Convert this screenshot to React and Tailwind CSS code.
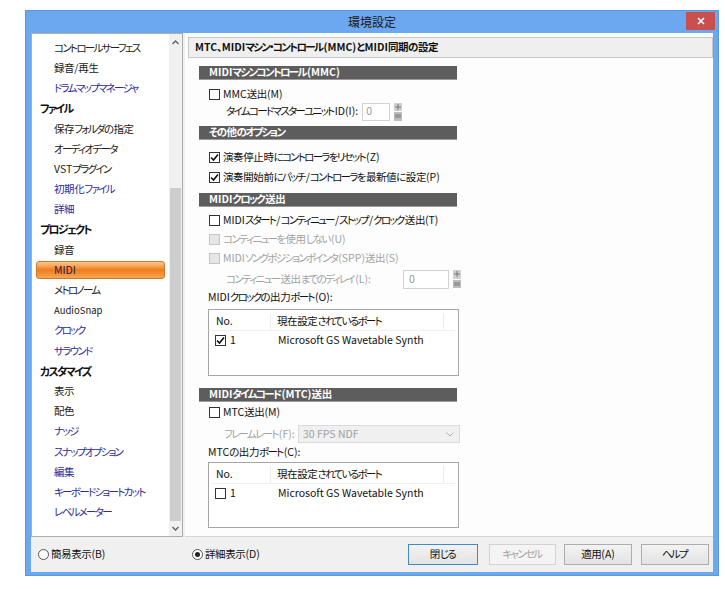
import React from "react";

const tree = [
  ["コントロールサーフェス", "item", "dark"],
  ["録音/再生", "item", "dark"],
  ["ドラムマップマネージャ", "item", "blue"],
  ["ファイル", "head"],
  ["保存フォルダの指定", "item", "dark"],
  ["オーディオデータ", "item", "dark"],
  ["VSTプラグイン", "item", "dark"],
  ["初期化ファイル", "item", "blue"],
  ["詳細", "item", "blue"],
  ["プロジェクト", "head"],
  ["録音", "item", "dark"],
  ["MIDI", "sel"],
  ["メトロノーム", "item", "dark"],
  ["AudioSnap", "item", "small"],
  ["クロック", "item", "blue"],
  ["サラウンド", "item", "blue"],
  ["カスタマイズ", "head"],
  ["表示", "item", "dark"],
  ["配色", "item", "dark"],
  ["ナッジ", "item", "blue"],
  ["スナップオプション", "item", "blue"],
  ["編集", "item", "blue"],
  ["キーボードショートカット", "item", "blue"],
  ["レベルメーター", "item", "blue"],
];

// kana are narrow in the UI font, kanji stay full width
function J({ t }) {
  const parts = t.split(/([\u3000-\u30ff]+|[\u4e00-\u9fff]+)/);
  return parts.map((p, i) => {
    if (!p) return null;
    if (/[\u3000-\u30ff]/.test(p))
      return (
        <span key={i} className="tracking-[-1.7px] mr-[1.2px]">
          {p}
        </span>
      );
    if (/[\u4e00-\u9fff]/.test(p))
      return (
        <span key={i} className="tracking-[-0.4px]">
          {p}
        </span>
      );
    return <span key={i}>{p}</span>;
  });
}

function Check({ checked, disabled }) {
  return (
    <span
      className={
        "w-[11px] h-[11px] flex items-center justify-center shrink-0 border " +
        (disabled ? "bg-[#e6e6e6] border-[#c4c4c4]" : "bg-white border-[#333]")
      }
    >
      {checked && (
        <svg width="9" height="9" viewBox="0 0 9 9">
          <path d="M1 4.5 L3.5 7 L8 1.5" stroke="#111" strokeWidth="1.6" fill="none" />
        </svg>
      )}
    </span>
  );
}

function CheckRow({ label, checked, disabled, className = "" }) {
  return (
    <div className={"h-4 flex items-center gap-[3px] pl-[24px] " + className}>
      <Check checked={checked} disabled={disabled} />
      <span className={disabled ? "text-[#a3a3a3]" : "text-[#111]"}>
        <J t={label} />
      </span>
    </div>
  );
}

function SectionBar({ children, className = "" }) {
  return (
    <div
      className={
        "ml-[14px] w-[258px] h-[14px] bg-[#5d5d5d] border-b border-[#9a9a9a] text-white font-bold pl-[10px] flex items-center leading-none " +
        className
      }
    >
      <J t={children} />
    </div>
  );
}

function Spinner() {
  return (
    <div className="w-[8px] h-[18px] flex flex-col gap-[1px] ml-[4px]">
      <div className="flex-1 bg-[#cfcfcf] flex items-center justify-center">
        <svg width="6" height="6" viewBox="0 0 6 6">
          <path d="M0 3 H6 M3 0 V6" stroke="#777" strokeWidth="1" />
        </svg>
      </div>
      <div className="flex-1 bg-[#bdbdbd] flex items-center justify-center">
        <svg width="6" height="6" viewBox="0 0 6 6">
          <path d="M0 2 H6 M0 4 H6" stroke="#777" strokeWidth="1" />
        </svg>
      </div>
    </div>
  );
}

function PortList({ checked, className = "" }) {
  return (
    <div className={"ml-[23px] w-[251px] border border-[#a5a5a5] bg-white " + className}>
      <div className="mx-[3px] mt-[3px] h-[18px] flex items-center border-b border-[#f0f0f0]">
        <div className="w-[59px] pl-[4px] border-r border-[#ececec] h-full flex items-center">No.</div>
        <div className="w-[173px] pl-[6px] border-r border-[#ececec] h-full flex items-center">
          <J t="現在設定されているポート" />
        </div>
      </div>
      <div className="mx-[3px] h-[18px] flex items-center">
        <div className="w-[59px] pl-[3px] flex items-center gap-[4px]">
          <Check checked={checked} />
          <span>1</span>
        </div>
        <div className="pl-[7px]">Microsoft GS Wavetable Synth</div>
      </div>
    </div>
  );
}

function Button({ children, primary, disabled, className = "" }) {
  return (
    <div
      className={
        "h-[21px] flex items-center justify-center border bg-gradient-to-b " +
        (primary
          ? "border-[#3d8ad0] from-[#f3f3f3] to-[#e3e3e3] "
          : disabled
          ? "border-[#d3d3d3] from-[#f4f4f4] to-[#f4f4f4] text-[#a3a3a3] "
          : "border-[#adadad] from-[#f3f3f3] to-[#e3e3e3] ") +
        className
      }
    >
      <J t={children} />
    </div>
  );
}

function Radio({ checked, label, className = "" }) {
  return (
    <div className={"flex items-center gap-[2px] " + className}>
      <span className="w-[11px] h-[11px] rounded-full border border-[#555] bg-white flex items-center justify-center">
        {checked && <span className="w-[5px] h-[5px] rounded-full bg-[#222]" />}
      </span>
      <span>
        <J t={label} />
      </span>
    </div>
  );
}

export default function App() {
  return (
    <div className="w-[725px] h-[589px] bg-white font-['Noto_Sans_CJK_JP','Noto_Sans',sans-serif] [font-feature-settings:'palt'] text-[10.5px] text-[#111] leading-none whitespace-nowrap overflow-hidden">
      <div className="ml-[25px] mt-[10px] w-[694px] h-[566px] bg-[#6ba8ef] flex flex-col border border-[#5a98e0]">
        {/* title */}
        <div className="h-[22px] relative flex items-center justify-center shrink-0">
          <span className="text-[12px] text-[#1a1a1a]">環境設定</span>
          <div className="absolute right-[3px] top-[1px] w-[29px] h-[18px] bg-[#c9504f] flex items-center justify-center">
            <svg width="8" height="8" viewBox="0 0 8 8">
              <path d="M1 1 L7 7 M7 1 L1 7" stroke="white" strokeWidth="1.6" />
            </svg>
          </div>
        </div>

        <div className="mx-[5px] flex-1 bg-[#f0f0f0] flex flex-col">
          <div className="h-[504px] flex gap-[2px]">
            {/* tree */}
            <div className="w-[152px] h-full bg-white border border-[#adadad] flex">
              <div className="flex-1 pt-[4px]">
                {tree.map(([t, kind, tone], i) =>
                  kind === "head" ? (
                    <div key={i} className="h-[20.2px] flex items-center pl-[8px] font-bold text-[11px] text-[#111]">
                      <J t={t} />
                    </div>
                  ) : kind === "sel" ? (
                    <div key={i} className="h-[20.2px] flex items-center">
                      <div className="ml-[4px] w-[129px] h-[18px] rounded-[3px] border border-[#cf7a2a] bg-gradient-to-b from-[#fcc888] via-[#ef7c15] to-[#f6a652] flex items-center pl-[17px] text-[10.5px] text-[#2a1a40]">
                        MIDI
                      </div>
                    </div>
                  ) : (
                    <div
                      key={i}
                      className={
                        "h-[20.2px] flex items-center pl-[22px] " +
                        (tone === "blue"
                          ? "text-[#2b2b9b]"
                          : tone === "small"
                          ? "text-[9.5px] text-[#222]"
                          : "text-[#222]")
                      }
                    >
                      <J t={t} />
                    </div>
                  )
                )}
              </div>
              {/* scrollbar */}
              <div className="w-[13px] h-full bg-[#f0f0f0] flex flex-col items-center">
                <div className="h-[17px] flex items-center">
                  <svg width="7" height="5" viewBox="0 0 7 5">
                    <path d="M0.5 4 L3.5 1 L6.5 4" stroke="#606060" strokeWidth="1.3" fill="none" />
                  </svg>
                </div>
                <div className="w-full flex-1 flex flex-col px-[1px]">
                  <div className="h-[138px]" />
                  <div className="h-[333px] bg-[#cdcdcd]" />
                </div>
                <div className="h-[15px] flex items-center">
                  <svg width="7" height="5" viewBox="0 0 7 5">
                    <path d="M0.5 1 L3.5 4 L6.5 1" stroke="#606060" strokeWidth="1.3" fill="none" />
                  </svg>
                </div>
              </div>
            </div>

            {/* right panel */}
            <div className="flex-1 h-full bg-[#fdfdfd] flex flex-col border-b border-[#d5d5d5]">
              <div className="mt-[4px] ml-[3px] h-[21px] bg-[#efefef] border border-[#c7c7c7] flex items-center pl-[6px] font-bold text-[#111]">
                <J t="MTC、MIDIマシン・コントロール(MMC)とMIDI同期の設定" />
              </div>

              <SectionBar className="mt-[8px]">MIDIマシンコントロール(MMC)</SectionBar>
              <CheckRow className="mt-[6px]" label="MMC送出(M)" />
              <div className="h-[19px] flex items-center pl-[41px]">
                <span className="min-w-[126px] text-[#111]">
                  <J t="タイムコードマスターユニットID(I):" />
                </span>
                <div className="ml-[4px] w-[28px] h-[18px] border border-[#d2d2d2] bg-white flex items-center pl-[3px] text-[#9a9a9a]">
                  0
                </div>
                <Spinner />
              </div>

              <SectionBar className="mt-[5px]">その他のオプション</SectionBar>
              <CheckRow className="mt-[9px]" checked label="演奏停止時にコントローラをリセット(Z)" />
              <CheckRow className="mt-[4px]" checked label="演奏開始前にパッチ/コントローラを最新値に設定(P)" />

              <SectionBar className="mt-[8px]">MIDIクロック送出</SectionBar>
              <CheckRow className="mt-[5px]" label="MIDIスタート/コンティニュー/ストップ/クロック送出(T)" />
              <CheckRow className="mt-[3px]" disabled label="コンティニューを使用しない(U)" />
              <CheckRow className="mt-[3px]" disabled label="MIDIソングポジションポインタ(SPP)送出(S)" />
              <div className="mt-[3px] h-[20px] flex items-center pl-[41px]">
                <span className="w-[177px] text-[#a3a3a3]">
                  <J t="コンティニュー送出までのディレイ(L):" />
                </span>
                <div className="w-[46px] h-[19px] border border-[#d2d2d2] bg-white flex items-center pl-[5px] text-[#9a9a9a]">
                  0
                </div>
                <Spinner />
              </div>
              <div className="h-[16px] flex items-center pl-[23px]">
                <J t="MIDIクロックの出力ポート(O):" />
              </div>
              <PortList className="mt-[4px] h-[67px]" checked />

              <SectionBar className="mt-[12px]">MIDIタイムコード(MTC)送出</SectionBar>
              <CheckRow className="mt-[2px]" label="MTC送出(M)" />
              <div className="mt-[5px] h-[18px] flex items-center pl-[39px]">
                <span className="w-[74px] text-[#a3a3a3]">
                  <J t="フレームレート(F):" />
                </span>
                <div className="w-[162px] h-[18px] border border-[#dadada] bg-[#f0f0f0] flex items-center justify-between pl-[4px] pr-[5px] text-[#a0a0a0]">
                  <span>30 FPS NDF</span>
                  <svg width="8" height="5" viewBox="0 0 8 5">
                    <path d="M0.5 0.5 L4 4 L7.5 0.5" stroke="#b0b0b0" strokeWidth="1" fill="none" />
                  </svg>
                </div>
              </div>
              <div className="mt-[1px] h-[16px] flex items-center pl-[23px]">
                <J t="MTCの出力ポート(C):" />
              </div>
              <PortList className="mt-[2px] h-[66px]" />
            </div>
          </div>

          {/* bottom bar */}
          <div className="flex-1 flex items-center pr-[4px]">
            <Radio className="ml-[7px] w-[154px]" label="簡易表示(B)" />
            <Radio checked label="詳細表示(D)" />
            <Button primary className="ml-auto w-[70px]">閉じる</Button>
            <Button disabled className="ml-[11px] w-[67px]">キャンセル</Button>
            <Button className="ml-[8px] w-[68px]">適用(A)</Button>
            <Button className="ml-[9px] w-[68px]">ヘルプ</Button>
          </div>
        </div>
        <div className="h-[3px] shrink-0" />
      </div>
    </div>
  );
}
